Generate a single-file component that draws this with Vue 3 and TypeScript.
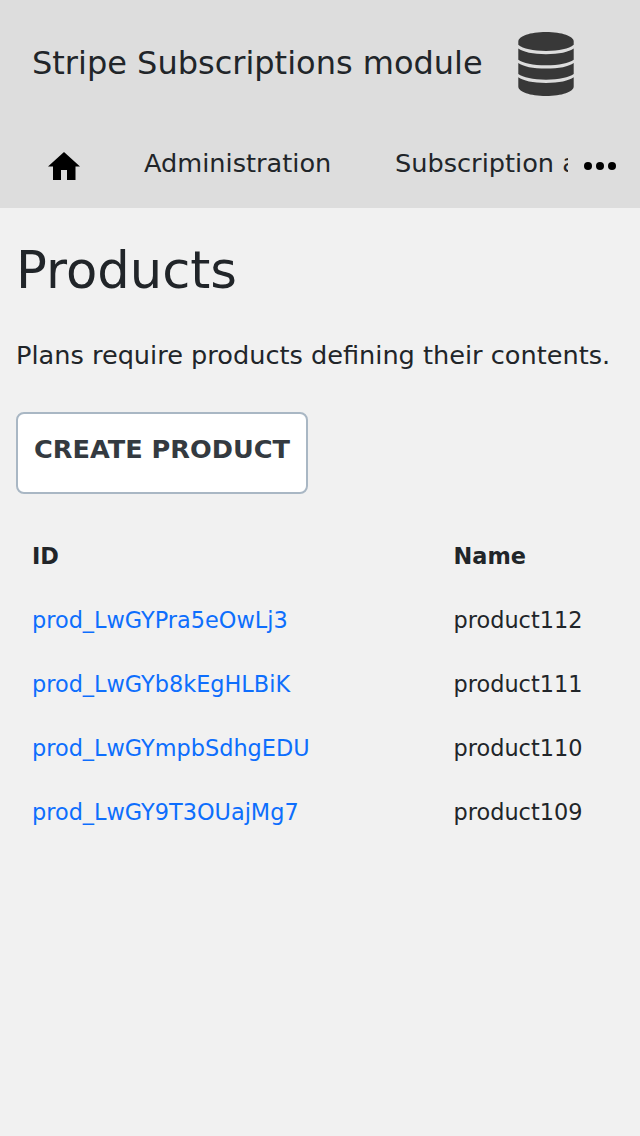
<script setup lang="ts">
interface Product {
  id: string
  name: string
}

const products: Product[] = [
  { id: 'prod_LwGYPra5eOwLj3', name: 'product112' },
  { id: 'prod_LwGYb8kEgHLBiK', name: 'product111' },
  { id: 'prod_LwGYmpbSdhgEDU', name: 'product110' },
  { id: 'prod_LwGY9T3OUajMg7', name: 'product109' },
]
</script>

<template>
  <div class="page">
    <header>
      <div class="brand">
        <span class="title">Stripe Subscriptions module</span>
        <svg class="database" viewBox="0 0 64 64" fill="#383838">
          <path d="M4.300 9.500C4.300 4.200 16 0 32 0s27.700 4.200 27.700 9.500v3.300C55 16.800 45 19 32 19S9 16.800 4.300 12.800z" />
          <path d="M4.300 16.500C9 20 19 22.200 32 22.200s23-2.200 27.700-5.700v11.200C55 31.200 45 33.300 32 33.300S9 31.200 4.300 27.700z" />
          <path d="M4.300 30.900C9 34.400 19 36.600 32 36.600s23-2.200 27.700-5.700v11.200C55 45.600 45 47.700 32 47.700S9 45.600 4.300 42.100z" />
          <path d="M4.300 45.300C9 48.800 19 51 32 51s23-2.200 27.700-5.700v9.200C59.700 59.800 48 64 32 64S4.300 59.800 4.300 54.500z" />
        </svg>
      </div>
      <nav>
        <a class="home" aria-label="Home">
          <svg viewBox="0 0 32 28"><path d="M16 0 0 14.500h5V28h8V18h6v10h8.500V14.500H32z" /></svg>
        </a>
        <a class="admin">Administration</a>
        <a class="subscription">Subscription administration</a>
        <button class="more" aria-label="More">
          <svg viewBox="0 0 32 8"><circle cx="4" cy="4" r="4" /><circle cx="16" cy="4" r="4" /><circle cx="28" cy="4" r="4" /></svg>
        </button>
      </nav>
    </header>
    <main>
      <h1>Products</h1>
      <p>Plans require products defining their contents.</p>
      <button class="create">CREATE PRODUCT</button>
      <table>
        <thead><tr><th>ID</th><th>Name</th></tr></thead>
        <tbody>
          <tr v-for="product in products" :key="product.id">
            <td><a>{{ product.id }}</a></td>
            <td>{{ product.name }}</td>
          </tr>
        </tbody>
      </table>
    </main>
  </div>
</template>

<style>
body { margin: 0; background: #f1f1f1; }
</style>

<style scoped>
.page { height: 1136px; overflow: hidden; background: #f1f1f1; color: #212529; font: 25.6px/38.4px "DejaVu Sans", sans-serif; }
header { height: 208px; background: #ddd; }
.brand { display: flex; align-items: center; height: 128px; padding-left: 32px; box-sizing: border-box; }
.title { width: 482px; padding-bottom: 2px; font-size: 32px; line-height: 48px; white-space: nowrap; }
.database { width: 64px; height: 64px; }
nav { display: flex; height: 80px; }
.home { width: 32px; padding: 24px 32px 0 48px; }
.home svg { display: block; width: 32px; height: 28px; }
.admin { width: 187px; padding: 16px 32px 0; white-space: nowrap; }
.subscription { width: 173px; margin-left: 32px; padding-top: 16px; overflow: hidden; white-space: nowrap; }
.more { display: flex; align-items: flex-start; width: 72px; padding: 34px 24px 0 16px; box-sizing: border-box; border: 0; background: none; }
.more svg { display: block; width: 32px; height: 8px; }
main { padding: 32px 16px 0; }
h1 { margin: 0; font-size: 51.2px; line-height: 61px; font-weight: 400; }
p { margin: 35px 0 38px; white-space: nowrap; }
.create { display: block; width: 292px; height: 82px; padding: 0 0 8px; border: 2px solid #a9b7c4; border-radius: 8px; background: #fff; color: #343a40; font: bold 25.6px/38.4px "DejaVu Sans", sans-serif; white-space: nowrap; }
table { width: 608px; margin-top: 30px; border-spacing: 0; table-layout: fixed; font-size: 22.4px; line-height: 32px; }
th, td { height: 64px; padding: 0 16px; box-sizing: border-box; text-align: left; }
th:first-child { width: 421.6px; }
td a { color: #0d6efd; }
</style>
